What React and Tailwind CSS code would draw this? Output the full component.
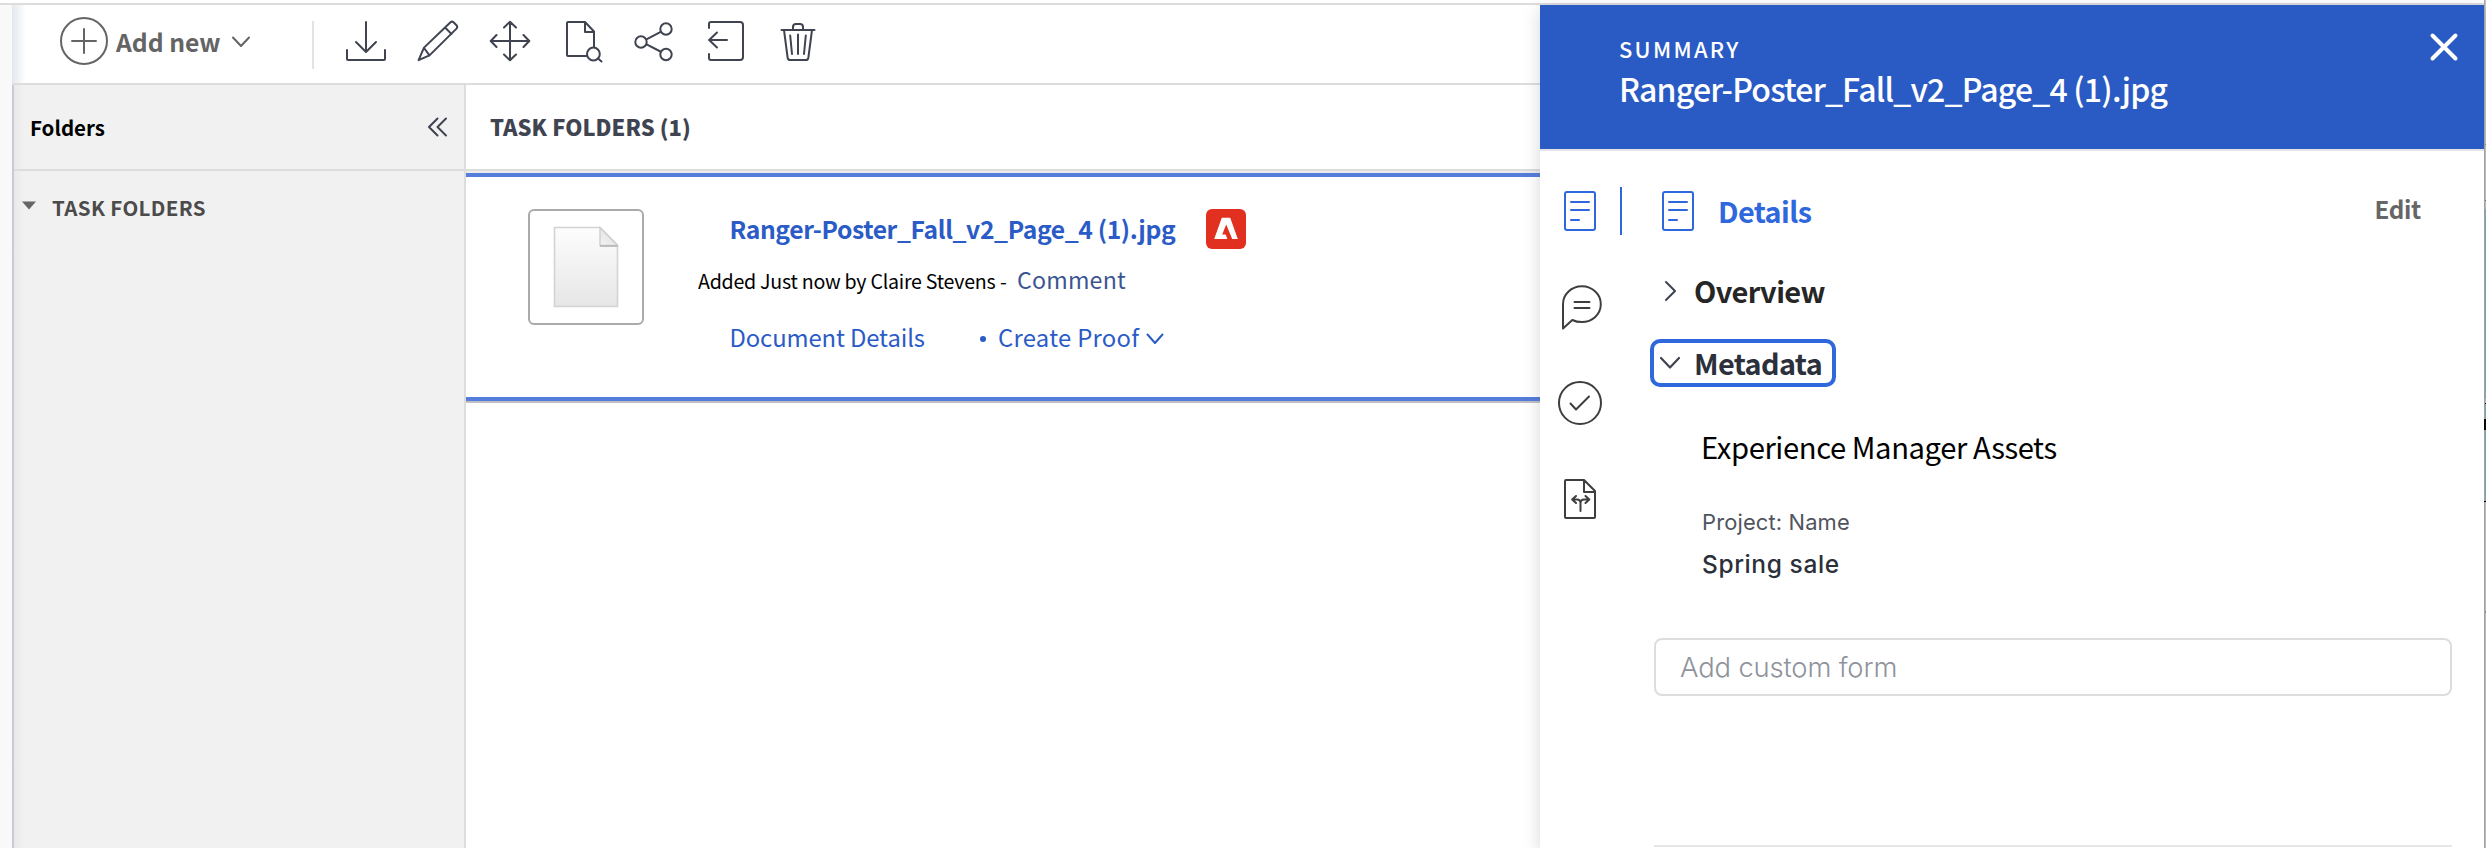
import React from "react";

const FONT = "font-['Noto_Sans_CJK_SC','Noto_Sans',sans-serif]";

function Icon({ w, h, sw = 2, className = "", children }) {
  return (
    <svg
      width={w}
      height={h}
      viewBox={`0 0 ${w} ${h}`}
      fill="none"
      stroke="currentColor"
      strokeWidth={sw}
      strokeLinecap="round"
      strokeLinejoin="round"
      className={`block shrink-0 ${className}`}
    >
      {children}
    </svg>
  );
}

function DetailsIcon({ className = "" }) {
  return (
    <Icon w={32} h={40} className={className}>
      <rect x="1" y="1" width="30" height="38" rx="2" />
      <path d="M7 11H25M7 19H25M7 29H15" />
    </Icon>
  );
}

function Toolbar() {
  return (
    <div className="flex h-[80px] shrink-0 items-start border-b-2 border-[#dddddd] pl-[48px] text-[#3f4450]">
      <button className="mt-[12px] flex h-[48px] items-center text-[#646464]">
        <Icon w={48} h={48}>
          <circle cx="24" cy="24" r="23" />
          <path d="M12 24H36M24 12V36" />
        </Icon>
        <span className="ml-[8px] w-[115px] text-left text-[24.7px] leading-[48px] font-bold whitespace-nowrap">
          Add new
        </span>
        <Icon w={20} h={12} className="mt-[2px]">
          <path d="M2 1.5L10 10L18 1.5" />
        </Icon>
      </button>
      <div className="mt-[16px] ml-[61px] h-[48px] w-[2px] bg-[#e3e3e3]" />
      <div className="mt-[14px] ml-[30px] flex">
        <Icon w={44} h={44}>
          <path d="M22 3V32M12 23L22 33L32 23M3 31V40Q3 41 4 41H40Q41 41 41 40V31" />
        </Icon>
        <Icon w={44} h={44} className="ml-[28px]">
          <path d="M2.6 41.2L8 28.6L34.5 3.2Q36 2 37.5 3.2L40.5 6.2Q42 8 40.5 9.6L13.5 36.4ZM8 29L13.5 36.4M29 8.5L35.5 15" />
        </Icon>
        <Icon w={44} h={44} className="ml-[28px]">
          <path d="M22 3V41M3 22H41M16 8.5L22 2.7L28 8.5M16 35.5L22 41.3L28 35.5M8.5 16L2.7 22L8.5 28M35.5 16L41.3 22L35.5 28" />
        </Icon>
        <Icon w={44} h={46} className="ml-[28px]">
          <path d="M26.5 37H8Q7 37 7 36V4Q7 3 8 3H25L34 12.5V28M25 3V13H34" />
          <circle cx="33.4" cy="35" r="6.4" />
          <path d="M38 39.5L41.5 42.5" />
        </Icon>
        <Icon w={44} h={44} className="ml-[28px]">
          <circle cx="9" cy="23" r="5.7" />
          <circle cx="34" cy="10" r="5.7" />
          <circle cx="34" cy="35.5" r="5.7" />
          <path d="M14.4 20.3L28.7 12.8M14.6 25.4L28.4 32.5" />
        </Icon>
        <Icon w={44} h={44} className="ml-[28px]">
          <path d="M5 9V5Q5 3 7 3H36Q39 3 39 6V38Q39 41 36 41H7Q5 41 5 39V35M23 21H5M13 13.5L5.2 21L13 28.5" />
        </Icon>
        <Icon w={44} h={44} className="ml-[28px]">
          <path d="M5.5 11H38.5M17 10.5V8Q17 5 20 5H24Q27 5 27 8V10.5M8 11L11.6 38.5Q12 41 14 41H30Q32 41 32.4 38.5L36 11M14.2 16.5L16 35M22 15.5V35M29.8 16.5L28 35" />
        </Icon>
      </div>
    </div>
  );
}

function Sidebar() {
  return (
    <aside className="flex w-[454px] shrink-0 flex-col border-r-2 border-l-2 border-r-[#dddddd] border-l-[#c9cbd3] bg-[#f1f1f1] bg-linear-to-r from-[#e9e9eb] to-[#f1f1f1] to-[10px]">
      <div className="flex h-[86px] shrink-0 items-center justify-between border-b-2 border-[#dddddd] pr-[16px] pl-[16px]">
        <span className="pb-[1px] text-[20.5px] leading-[30px] font-bold text-black">Folders</span>
        <Icon w={22} h={20} className="text-[#3f4450]">
          <path d="M11.5 1.5L3 10L11.5 18.5M20 1.5L11.5 10L20 18.5" />
        </Icon>
      </div>
      <div className="flex items-start pt-[22px] pl-[7px]">
        <svg width="16" height="10" viewBox="0 0 16 10" className="mt-[8px] block">
          <path d="M1 0.5H15L8 8.5Z" fill="#666666" />
        </svg>
        <span className="ml-[15px] text-[20.5px] leading-[28px] font-bold tracking-[0.36px] whitespace-nowrap text-[#4b4b4b]">
          TASK FOLDERS
        </span>
      </div>
    </aside>
  );
}

function FileThumb() {
  return (
    <div className="ml-[62px] flex h-[116px] w-[116px] items-center justify-center rounded-[6px] border-2 border-[#aaaaaa] bg-white">
      <svg width="66" height="84" viewBox="0 0 66 84" className="block">
        <defs>
          <linearGradient id="page" x1="0" y1="0" x2="0" y2="1">
            <stop offset="0" stopColor="#fdfdfd" />
            <stop offset="1" stopColor="#e6e6e6" />
          </linearGradient>
          <linearGradient id="fold" x1="0" y1="1" x2="1" y2="0">
            <stop offset="0" stopColor="#f2f2f2" />
            <stop offset="1" stopColor="#dedede" />
          </linearGradient>
        </defs>
        <path d="M1.5 2.5H47L64.5 20V81.5H1.5Z" fill="url(#page)" stroke="#d3d3d3" strokeWidth="1.6" />
        <path d="M47 2.5V20.5H64.5Z" fill="url(#fold)" stroke="#cfcfcf" strokeWidth="1.4" />
        <path d="M47 21H64.5" stroke="#b5b5b5" strokeWidth="1.6" />
      </svg>
    </div>
  );
}

function DocumentRow() {
  return (
    <div className="flex h-[228px] shrink-0 items-start border-t-4 border-b-4 border-[#547cda] pt-[32px]">
      <FileThumb />
      <div className="ml-[54px] flex flex-col">
        <div className="flex h-[40px] items-center pl-[31.5px]">
          <a className="w-[476.5px] pb-[2px] text-[24.7px] leading-[38px] font-bold tracking-[-0.4px] whitespace-nowrap text-[#2a5bc6]">
            Ranger-Poster_Fall_v2_Page_4 (1).jpg
          </a>
          <svg width="40" height="40" viewBox="0 0 40 40" className="block">
            <rect width="40" height="40" rx="6" fill="#e1301f" />
            <path d="M15.8 8.7H24.2L31.8 30H26.2L20.2 15.5L16.2 25.5H19.7L21.4 30H8.2Z" fill="#fff" />
          </svg>
        </div>
        <div className="mt-[10px] flex h-[40px] items-baseline leading-[40px] whitespace-nowrap">
          <span className="w-[302px] text-[19.6px] tracking-[-0.25px] text-black">Added Just now by Claire Stevens</span>
          <span className="w-[17px] text-[19.6px] text-black">-</span>
          <a className="text-[23.2px] tracking-[0.2px] text-[#3c5592]">Comment</a>
        </div>
        <div className="mt-[18px] flex h-[40px] items-center pl-[31.5px] text-[23.8px] leading-[40px] whitespace-nowrap text-[#2a5bc6]">
          <a className="w-[250.5px] tracking-[-0.1px]">Document Details</a>
          <span className="mt-[4px] mr-[12px] h-[6px] w-[6px] rounded-full bg-[#2a5bc6]" />
          <a className="w-[148px] tracking-[0.3px]">Create Proof</a>
          <Icon w={18} h={12} className="mt-[4px]">
            <path d="M1.5 1.5L9 10L16.5 1.5" />
          </Icon>
        </div>
      </div>
    </div>
  );
}

function SummaryPanel() {
  return (
    <section className="relative z-10 flex w-[944px] shrink-0 flex-col bg-white shadow-[0_4px_16px_rgba(60,70,90,0.22)]">
      <header className="flex h-[146px] shrink-0 items-start justify-between border-b-2 border-[#e5e5e5] bg-[#2a5bc4] text-white">
        <div className="flex flex-col pt-[29px] pl-[79px]">
          <span className="text-[21.9px] leading-[30px] font-medium tracking-[2.3px]">SUMMARY</span>
          <span className="mt-[4px] text-[32px] leading-[40px] font-medium tracking-[-0.8px] whitespace-nowrap">
            Ranger-Poster_Fall_v2_Page_4 (1).jpg
          </span>
        </div>
        <Icon w={30} h={30} sw={4} className="mt-[27px] mr-[25px]">
          <path d="M3.5 3.5L26.5 26.5M26.5 3.5L3.5 26.5" />
        </Icon>
      </header>
      <div className="flex min-h-0 flex-1">
        <nav className="flex w-[80px] shrink-0 flex-col items-center pt-[40px] text-[#3e3e3e]">
          <DetailsIcon className="text-[#2f67dc]" />
          <Icon w={44} h={48} className="mt-[52px] ml-[2px]">
            <path d="M4 45.5V21.2A18.9 17.9 0 1 1 22.8 39.1Q17.5 39.1 13.3 37ZM15.5 19H30.5M15.5 25H30.5" />
          </Icon>
          <Icon w={46} h={46} className="mt-[49px]">
            <circle cx="23" cy="23" r="21" />
            <path d="M13.5 23.5L19 29.5L32 16.5" />
          </Icon>
          <Icon w={32} h={40} className="mt-[53px]">
            <path d="M2 1H20L31 12V38Q31 39 30 39H2Q1 39 1 38V2Q1 1 2 1ZM20 1V13H31M16.5 32V24Q16.5 20.5 20 20.5H24.5M16.5 24Q16.5 20.5 13 20.5H8.5M12 17L8.2 20.5L12 24M21.5 17L25.3 20.5L21.5 24" />
          </Icon>
        </nav>
        <div className="mt-[36px] h-[48px] w-[2px] shrink-0 bg-[#2f67dc]" />
        <div className="flex flex-1 flex-col pr-[32px] pl-[28px]">
          <div className="flex h-[120px] shrink-0 items-start pt-[40px] pl-[12px]">
            <DetailsIcon className="text-[#2f67dc]" />
            <h2 className="ml-[24px] text-[28.8px] leading-[40px] font-bold tracking-[-0.6px] text-[#2f67dc]">Details</h2>
            <button className="mr-[31px] ml-auto text-[24.2px] leading-[36px] font-bold tracking-[-0.3px] text-[#666666]">Edit</button>
          </div>
          <div className="flex h-[40px] items-center pl-[12px]">
            <Icon w={20} h={24} className="text-[#3f4450]">
              <path d="M4 3L13 12L4 21" />
            </Icon>
            <span className="ml-[12px] pb-[2px] text-[29px] leading-[38px] font-bold tracking-[-0.65px] text-[#262626]">Overview</span>
          </div>
          <div className="mt-[28px] flex h-[48px] w-[186px] items-center rounded-[10px] border-4 border-[#2f67dc] pl-[5px]">
            <Icon w={22} h={14} sw={2.2} className="text-[#3f4450]">
              <path d="M2 2L11 11.5L20 2" />
            </Icon>
            <span className="ml-[13px] text-[28.8px] leading-[40px] font-bold tracking-[-0.6px] text-[#2b303b]">Metadata</span>
          </div>
          <h3 className="mt-[39px] ml-[51px] text-[29.2px] leading-[40px] tracking-[-0.4px] whitespace-nowrap text-black">
            Experience Manager Assets
          </h3>
          <div className="mt-[41px] ml-[52px] flex flex-col font-[Inter,sans-serif]">
            <span className="text-[21.9px] leading-[30px] tracking-[0.15px] text-[#51545e]">Project: Name</span>
            <span className="mt-[11px] text-[24.5px] leading-[32px] font-medium tracking-[0.6px] text-[#2b303b]">Spring sale</span>
          </div>
          <div className="mt-[58px] ml-[4px] flex h-[58px] shrink-0 items-center rounded-[8px] border-2 border-[#dddddd] pl-[24px] font-[Inter,sans-serif] text-[27.4px] leading-[40px] font-light tracking-[-0.15px] text-[#8f939b]">
            Add custom form
          </div>
          <div className="mt-[149px] ml-[4px] h-[2px] bg-[#e6e6e6]" />
        </div>
      </div>
    </section>
  );
}

function PageEdge() {
  return (
    <div className="flex w-[2px] shrink-0 flex-col border-l border-[#999999]/60 bg-[#c6c6c6]">
      <div className="h-[144px]" />
      <div className="h-px bg-[#888888]" />
      <div className="h-[55px]" />
      <div className="h-px bg-[#777777]" />
      <div className="h-[8px]" />
      <div className="h-[190px] bg-[#84b0bb]" />
      <div className="h-[4px]" />
      <div className="h-px bg-black" />
      <div className="h-[15px] bg-[#84b0bb]" />
      <div className="-ml-px h-[11px] bg-black" />
      <div className="h-[71px] bg-[#84b0bb]" />
      <div className="-ml-px h-px bg-black" />
      <div className="h-[109px]" />
      <div className="h-[2px] bg-[#999999]" />
    </div>
  );
}

export default function App() {
  return (
    <div className={`flex h-[848px] w-[2486px] overflow-hidden bg-white ${FONT}`}>
      <div className="flex w-[2484px] shrink-0 flex-col">
        <div className="h-[5px] shrink-0 border-b-2 border-[#dddddd] bg-white" />
        <div className="flex min-h-0 flex-1">
          <div className="w-[12px] shrink-0 bg-[#f9f9f9]" />
          <div className="flex min-w-0 flex-1 flex-col bg-linear-to-r from-[#e3e7ec] to-white to-[14px]">
            <Toolbar />
            <div className="flex min-h-0 flex-1">
              <Sidebar />
              <main className="flex flex-1 flex-col bg-white">
                <div className="flex h-[86px] shrink-0 items-center border-b-2 border-[#dddddd] pl-[24px]">
                  <h1 className="pb-[1px] text-[21.9px] leading-[30px] font-extrabold tracking-[0.05px] whitespace-nowrap text-[#3f4450]">
                    TASK FOLDERS (1)
                  </h1>
                </div>
                <div className="h-[2px] shrink-0 bg-[#ececec]" />
                <DocumentRow />
                <div className="h-[2px] shrink-0 bg-[#bfbfc3]" />
              </main>
            </div>
          </div>
          <SummaryPanel />
        </div>
      </div>
      <PageEdge />
    </div>
  );
}
